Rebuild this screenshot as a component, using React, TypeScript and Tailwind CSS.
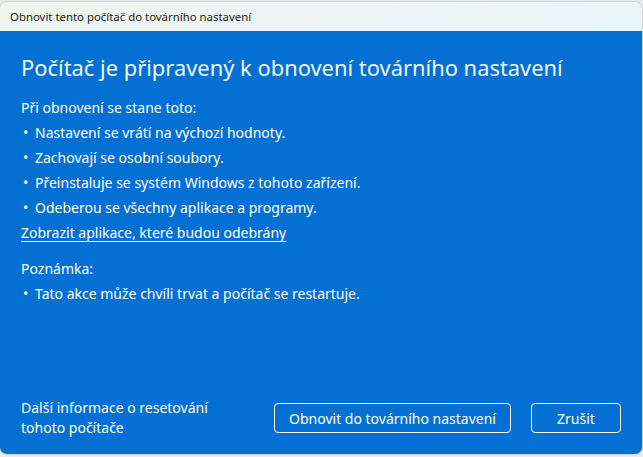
import React from "react";

const font = { fontFamily: '"Noto Sans", "Open Sans", sans-serif' };

export default function App() {
  const bullets = [
    "Nastavení se vrátí na výchozí hodnoty.",
    "Zachovají se osobní soubory.",
    "Přeinstaluje se systém Windows z tohoto zařízení.",
    "Odeberou se všechny aplikace a programy.",
  ];
  return (
    <div className="w-[643px] h-[457px] bg-[#e9ecef] overflow-hidden" style={font}>
      <div className="h-[452px] w-[642px] mt-[2px] rounded-[7px] overflow-hidden flex flex-col shadow-[0_0_2px_rgba(0,0,0,0.4)]">
        <div className="h-[29px] shrink-0 bg-gradient-to-r from-[#f1f4ee] to-[#eaf5fa] flex items-center pl-[10px] text-[11.4px] text-[#1a1a1a]">
          Obnovit tento počítač do továrního nastavení
        </div>
        <div className="flex-1 bg-[#0570d3] text-white flex flex-col px-[21px]">
          <div className="text-[21.9px] leading-[32px] mt-[21px] text-[#eef6ff]">
            Počítač je připravený k obnovení továrního nastavení
          </div>
          <div className="mt-[11px] text-[14px] leading-[25px]">
            <div>Při obnovení se stane toto:</div>
            {bullets.map((b) => (
              <div key={b} className="flex">
                <span className="w-[14px] pl-[2px]">•</span>
                <span>{b}</span>
              </div>
            ))}
            <div className="underline underline-offset-[3px]">Zobrazit aplikace, které budou odebrány</div>
            <div className="mt-[11px]">Poznámka:</div>
            <div className="flex">
              <span className="w-[14px] pl-[2px]">•</span>
              <span>Tato akce může chvíli trvat a počítač se restartuje.</span>
            </div>
          </div>
          <div className="mt-auto mb-[16px] flex items-center justify-between">
            <div className="text-[14px] leading-[20px]">
              Další informace o resetování
              <br />
              tohoto počítače
            </div>
            <div className="flex gap-[20px] mr-[0px]">
              <button className="h-[30px] w-[237px] rounded-[4px] border-[1.5px] border-white text-[14px]">
                Obnovit do továrního nastavení
              </button>
              <button className="h-[30px] w-[90px] rounded-[4px] border-[1.5px] border-white text-[14px]">
                Zrušit
              </button>
            </div>
          </div>
        </div>
      </div>
    </div>
  );
}
